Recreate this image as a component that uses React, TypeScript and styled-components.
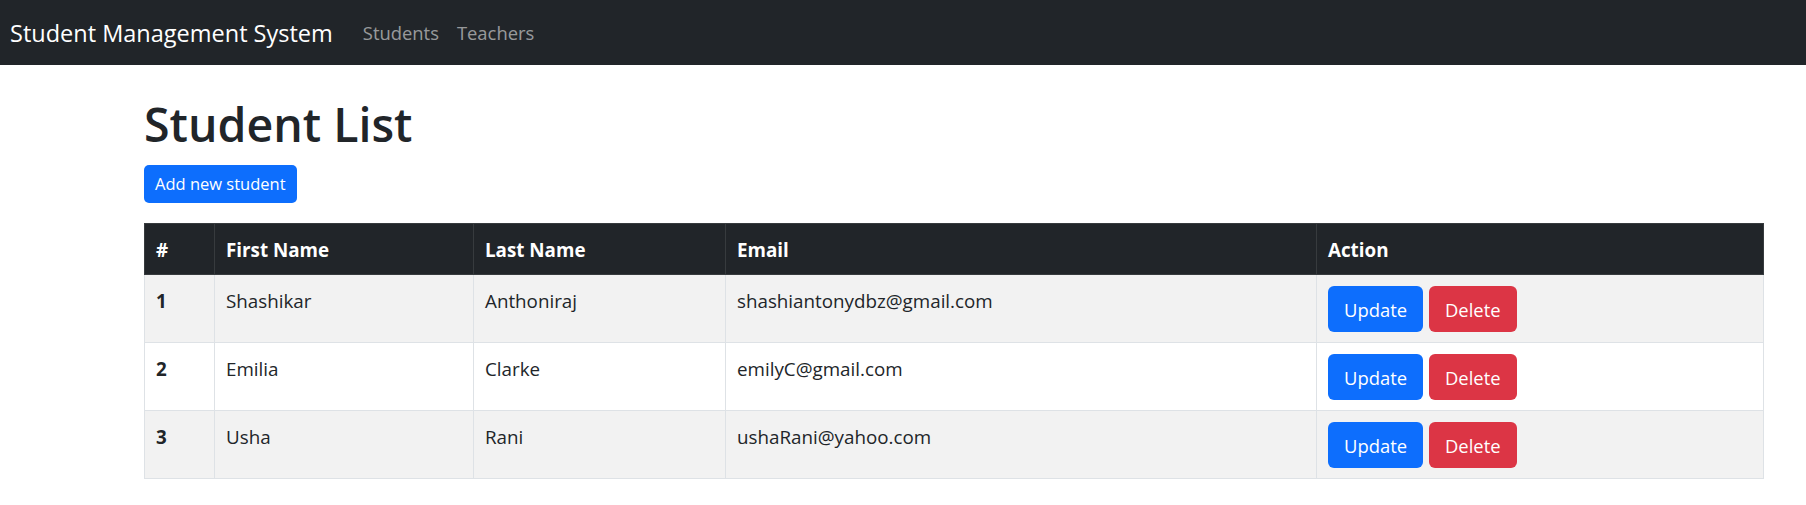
import styled, { createGlobalStyle } from 'styled-components';

const FONT = "'Open Sans', 'Noto Sans', 'Liberation Sans', sans-serif";

const GlobalStyle = createGlobalStyle`
  body {
    margin: 0;
    font-family: ${FONT};
    color: #212529;
    background: #fff;
  }
`;

const StyledNavbar = styled.nav`
  display: flex;
  align-items: center;
  height: 65px;
  padding: 0 10px;
  background-color: #212529;
`;

const StyledBrand = styled.a`
  margin-right: 21px;
  font-size: 23.5px;
  color: #fff;
  text-decoration: none;
`;

const StyledNavLink = styled.a`
  padding: 0 9px;
  font-size: 18.4px;
  color: rgba(255, 255, 255, 0.55);
  text-decoration: none;
`;

const StyledMain = styled.main`
  padding: 0 43px 0 144px;
`;

const StyledTitle = styled.h1`
  margin: 32px 0 12px;
  font-size: 46.5px;
  font-weight: 600;
  line-height: 1.2;
`;

const StyledButton = styled.button<{ $variant: 'primary' | 'danger'; $size?: 'sm' | 'md' }>`
  display: inline-flex;
  align-items: center;
  justify-content: center;
  box-sizing: border-box;
  height: ${({ $size }) => ($size === 'sm' ? '38px' : '46px')};
  padding: ${({ $size }) => ($size === 'sm' ? '0 10px' : '0 15px')};
  border: 1px solid transparent;
  border-radius: ${({ $size }) => ($size === 'sm' ? '5px' : '6px')};
  background-color: ${({ $variant }) => ($variant === 'primary' ? '#0d6efd' : '#dc3545')};
  color: #fff;
  font-family: ${FONT};
  font-size: ${({ $size }) => ($size === 'sm' ? '16.5px' : '18.4px')};
  cursor: pointer;
`;

const StyledTable = styled.table`
  width: 100%;
  margin-top: 20px;
  border-collapse: collapse;
  table-layout: fixed;
  border: 1px solid #dee2e6;
  font-size: 18.8px;
  line-height: 27.6px;
`;

const StyledHeadCell = styled.th`
  padding: 13px 11px 10px;
  background-color: #212529;
  border: 1px solid #373b3e;
  color: #fff;
  font-weight: 700;
  text-align: left;
`;

const StyledRow = styled.tr<{ $striped: boolean }>`
  background-color: ${({ $striped }) => ($striped ? '#f2f2f2' : '#fff')};
`;

const StyledCell = styled.td<{ $bold?: boolean; $actions?: boolean }>`
  padding: ${({ $actions }) => ($actions ? '11px 11px 10px' : '13px 11px 10px')};
  border: 1px solid #dee2e6;
  vertical-align: top;
  font-weight: ${({ $bold }) => ($bold ? 700 : 400)};
`;

const StyledActions = styled.div`
  display: flex;
  gap: 6px;
`;

const students = [
  { id: 1, firstName: 'Shashikar', lastName: 'Anthoniraj', email: 'shashiantonydbz@gmail.com' },
  { id: 2, firstName: 'Emilia', lastName: 'Clarke', email: 'emilyC@gmail.com' },
  { id: 3, firstName: 'Usha', lastName: 'Rani', email: 'ushaRani@yahoo.com' },
];

const columns = [
  { label: '#', width: 70 },
  { label: 'First Name', width: 259 },
  { label: 'Last Name', width: 252 },
  { label: 'Email', width: 591 },
  { label: 'Action', width: 447 },
];

const App = () => (
  <>
    <GlobalStyle />
    <StyledNavbar>
      <StyledBrand href="#">Student Management System</StyledBrand>
      <StyledNavLink href="#">Students</StyledNavLink>
      <StyledNavLink href="#">Teachers</StyledNavLink>
    </StyledNavbar>
    <StyledMain>
      <StyledTitle>Student List</StyledTitle>
      <StyledButton $variant="primary" $size="sm" type="button">
        Add new student
      </StyledButton>
      <StyledTable>
        <colgroup>
          {columns.map((column) => (
            <col key={column.label} style={{ width: column.width }} />
          ))}
        </colgroup>
        <thead>
          <tr>
            {columns.map((column) => (
              <StyledHeadCell key={column.label}>{column.label}</StyledHeadCell>
            ))}
          </tr>
        </thead>
        <tbody>
          {students.map((student, index) => (
            <StyledRow key={student.id} $striped={index % 2 === 0}>
              <StyledCell $bold>{student.id}</StyledCell>
              <StyledCell>{student.firstName}</StyledCell>
              <StyledCell>{student.lastName}</StyledCell>
              <StyledCell>{student.email}</StyledCell>
              <StyledCell $actions>
                <StyledActions>
                  <StyledButton $variant="primary" type="button">
                    Update
                  </StyledButton>
                  <StyledButton $variant="danger" type="button">
                    Delete
                  </StyledButton>
                </StyledActions>
              </StyledCell>
            </StyledRow>
          ))}
        </tbody>
      </StyledTable>
    </StyledMain>
  </>
);

export default App;
